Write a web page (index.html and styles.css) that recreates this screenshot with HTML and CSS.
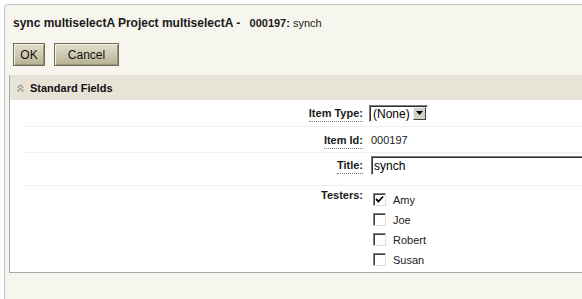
FILE: index.html
```html
<!DOCTYPE html>
<html lang="en">
<head>
  <meta charset="UTF-8" />
  <title>sync multiselectA - 000197</title>
  <link rel="stylesheet" href="styles.css">
</head>
<body>
  <div class="page">
    <h1 class="title">
      sync multiselectA Project multiselectA -
      <span class="item-ref"><b>000197:</b> synch</span>
    </h1>

    <div class="actions">
      <button class="btn btn-ok">OK</button>
      <button class="btn btn-cancel">Cancel</button>
    </div>

    <div class="panel">
      <div class="panel-head">
        <svg class="collapse-icon" width="7" height="8" viewBox="0 0 7 8">
          <path d="M0.5 4 L3.5 1 L6.5 4 M0.5 7.5 L3.5 4.5 L6.5 7.5" fill="none" stroke="#9a968a" stroke-width="1.2"/>
        </svg>
        Standard Fields
      </div>

      <div class="panel-body">
        <div class="row row-type">
          <label class="field-label"><span class="hint">Item Type:</span></label>
          <div class="field-value">
            <span class="select-box">
              <select>
                <option>(None)</option>
              </select>
              <span class="select-arrow">
                <svg width="7" height="4" viewBox="0 0 7 4"><path d="M0 0 H7 L3.5 4 Z" fill="#000"/></svg>
              </span>
            </span>
          </div>
        </div>

        <div class="row row-id">
          <label class="field-label"><span class="hint">Item Id:</span></label>
          <div class="field-value">000197</div>
        </div>

        <div class="row row-title">
          <label class="field-label"><span class="hint">Title:</span></label>
          <div class="field-value">
            <input type="text" class="text-input" value="synch">
          </div>
        </div>

        <div class="row row-testers">
          <label class="field-label">Testers:</label>
          <div class="field-value checklist">
            <label class="check"><span class="box checked"><svg width="9" height="9" viewBox="0 0 9 9"><path d="M1 4 L3.5 6.5 L8 1.5" fill="none" stroke="#000" stroke-width="1.8"/></svg></span>Amy</label>
            <label class="check"><span class="box"></span>Joe</label>
            <label class="check"><span class="box"></span>Robert</label>
            <label class="check"><span class="box"></span>Susan</label>
          </div>
        </div>
      </div>
    </div>
  </div>
</body>
</html>
```

FILE: styles.css
```css
body {
  margin: 0;
  background: #ffffff;
  font-family: 'Liberation Sans', Arial, sans-serif;
  font-size: 11px;
  color: #222;
  overflow: hidden;
}

.page {
  height: 295px;
  margin: 4px 0 0 4px;
  padding: 10px 0 0 0;
  background: #f6f5ee;
  border-top: 1px solid #c4c4c4;
  border-left: 1px solid #c4c4c4;
  border-top-left-radius: 4px;
  box-sizing: border-box;
  overflow: hidden;
}

.title {
  margin: 0 0 0 8px;
  font-size: 12px;
  font-weight: bold;
  line-height: 16px;
  color: #1a1a1a;
  white-space: nowrap;
}

.item-ref {
  margin-left: 6px;
  font-size: 11px;
  font-weight: normal;
}

.actions {
  display: flex;
  gap: 9px;
  margin: 12px 0 0 8px;
}

.btn {
  height: 23px;
  padding: 0;
  font-family: 'Liberation Sans', Arial, sans-serif;
  font-size: 12px;
  color: #111;
  background: linear-gradient(#e2dfcc, #c9c5aa 60%, #b5b090);
  border: 1px solid #6e6b58;
  box-shadow: inset 1px 1px 0 #f3f1e4, inset -1px -1px 0 #9b9678;
  cursor: pointer;
}

.btn-ok {
  width: 32px;
}

.btn-cancel {
  width: 65px;
}

.panel {
  margin: 9px 0 0 4px;
  border-left: 1px solid #a8a8a8;
  border-bottom: 1px solid #a8a8a8;
  background: #ffffff;
  overflow: hidden;
}

.panel-head {
  display: flex;
  align-items: center;
  gap: 6px;
  height: 25px;
  padding-left: 7px;
  background: #e7e3d6;
  font-weight: bold;
  font-size: 11px;
  color: #111;
}

.panel-body {
  padding: 0 0 0 13px;
}

.row {
  display: grid;
  grid-template-columns: 340px 1fr;
  column-gap: 8px;
  align-items: center;
  border-bottom: 1px solid #efefef;
}

.row-type {
  height: 26px;
}

.row-id {
  height: 25px;
}

.row-title {
  height: 33px;
  align-items: start;
  padding-top: 3px;
  box-sizing: border-box;
}

.row-testers {
  align-items: start;
  border-bottom: none;
  padding: 3px 0 6px;
}

.field-label {
  text-align: right;
  font-weight: bold;
  color: #1a1a1a;
}

.row-title .field-label {
  padding-top: 3px;
}

.hint {
  border-bottom: 1px dotted #7a7a7a;
  padding-bottom: 2px;
}

.field-value {
  color: #222;
}

.select-box {
  display: inline-flex;
  align-items: stretch;
  height: 17px;
  border: 1px solid;
  border-color: #7f7f7f #ffffff #ffffff #7f7f7f;
  box-shadow: inset 1px 1px 0 #303030;
  background: #ffffff;
  box-sizing: border-box;
  margin-left: -2px;
}

.select-box select {
  appearance: none;
  border: none;
  background: transparent;
  padding: 0 2px;
  margin: 1px 0 0 1px;
  font-family: 'Liberation Sans', Arial, sans-serif;
  font-size: 12px;
  color: #000;
  width: 42px;
}

.select-arrow {
  display: flex;
  align-items: center;
  justify-content: center;
  width: 13px;
  margin: 1px 1px 1px 0;
  background: #d4d0c8;
  border: 1px solid;
  border-color: #f0f0f0 #404040 #404040 #f0f0f0;
  box-sizing: border-box;
}

.text-input {
  width: 260px;
  height: 19px;
  padding: 0 2px;
  font-family: 'Liberation Sans', Arial, sans-serif;
  font-size: 12px;
  color: #000;
  border: 1px solid;
  border-color: #7f7f7f #ffffff #ffffff #7f7f7f;
  box-shadow: inset 1px 1px 0 #303030;
  box-sizing: border-box;
}

.checklist {
  display: flex;
  flex-direction: column;
  gap: 7px;
  padding-top: 4px;
  padding-left: 2px;
}

.check {
  display: flex;
  align-items: center;
  gap: 7px;
  height: 13px;
  font-size: 11px;
  color: #222;
}

.box {
  display: flex;
  align-items: center;
  justify-content: center;
  width: 13px;
  height: 13px;
  background: #ffffff;
  border: 1px solid;
  border-color: #808080 #e0ddd4 #e0ddd4 #808080;
  box-shadow: inset 1px 1px 0 #404040;
  box-sizing: border-box;
}
```
